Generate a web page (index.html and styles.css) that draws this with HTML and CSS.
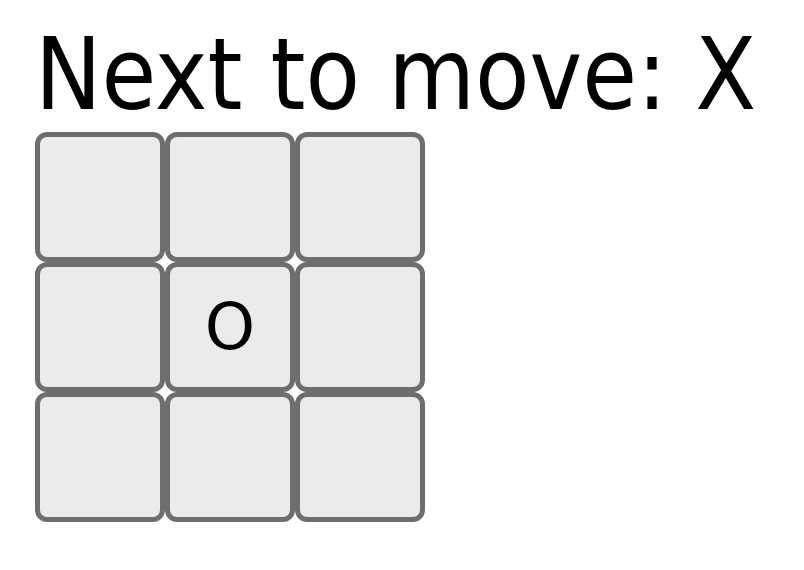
FILE: index.html
```html
<!DOCTYPE html>
<html lang="en">
<head>
    <meta charset="UTF-8">
    <title>Tic tac toe</title>
    <link rel="stylesheet" href="styles.css">
</head>
<body>
<div class="game">
    <div class="status">Next to move: X</div>
    <div class="board">
        <button class="square"></button>
        <button class="square"></button>
        <button class="square"></button>
        <button class="square"></button>
        <button class="square">O</button>
        <button class="square"></button>
        <button class="square"></button>
        <button class="square"></button>
        <button class="square"></button>
    </div>
</div>
</body>
</html>
```
FILE: styles.css
```css
body {
    margin: 0;
    background: #fff;
    font-family: "DejaVu Sans", sans-serif;
}

.game {
    padding: 25px 35px;
}

.status {
    font-family: "DejaVu Sans Condensed", "DejaVu Sans", sans-serif;
    font-size: 99px;
    line-height: 100px;
    color: #000;
    margin-bottom: 7px;
}

.board {
    display: grid;
    grid-template-columns: repeat(3, 130px);
    grid-auto-rows: 130px;
}

.square {
    box-sizing: border-box;
    margin: 0;
    padding: 0;
    background: #ebebeb;
    border: 5px solid #6e6e6e;
    border-radius: 12px;
    font-family: "DejaVu Sans", sans-serif;
    font-size: 64px;
    color: #000;
}
```
